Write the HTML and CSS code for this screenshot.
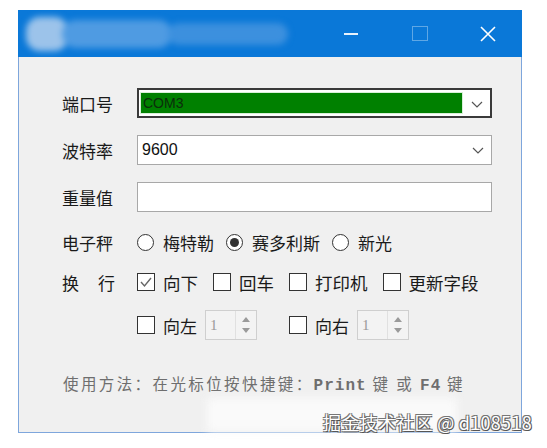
FILE: index.html
```html
<!DOCTYPE html>
<html lang="zh-CN">
<head>
    <meta charset="UTF-8">
    <meta name="viewport" content="width=device-width, initial-scale=1.0">
    <title>串口设置</title>
    <link rel="stylesheet" href="styles.css">
</head>
<body>
    <div class="window">
        <div class="titlebar">
            <div class="title-blur">
                <span class="blob blob-a"></span>
                <span class="blob blob-b"></span>
                <span class="blob blob-c"></span>
            </div>
            <div class="controls">
                <span class="ctl ctl-min"></span>
                <span class="ctl ctl-max"></span>
                <svg class="ctl-close" width="16" height="16" viewBox="0 0 16 16">
                    <path d="M1 1 L15 15 M15 1 L1 15" stroke="#fff" stroke-width="1.6" fill="none"/>
                </svg>
            </div>
        </div>

        <div class="content">
            <div class="row row-field">
                <label class="label">端口号</label>
                <div class="combo focused">
                    <span class="combo-sel">COM3</span>
                    <svg class="chevron" width="12" height="7" viewBox="0 0 12 7"><path d="M1 1 L6 6 L11 1" stroke="#555" stroke-width="1.2" fill="none"/></svg>
                </div>
            </div>
            <div class="row row-field">
                <label class="label">波特率</label>
                <div class="combo">
                    <span class="combo-text">9600</span>
                    <svg class="chevron" width="12" height="7" viewBox="0 0 12 7"><path d="M1 1 L6 6 L11 1" stroke="#555" stroke-width="1.2" fill="none"/></svg>
                </div>
            </div>
            <div class="row row-field">
                <label class="label">重量值</label>
                <div class="textbox"></div>
            </div>

            <div class="row row-radio">
                <label class="label">电子秤</label>
                <div class="options">
                    <span class="opt"><span class="radio"></span>梅特勒</span>
                    <span class="opt"><span class="radio on"></span>赛多利斯</span>
                    <span class="opt"><span class="radio"></span>新光</span>
                </div>
            </div>

            <div class="row row-check">
                <label class="label spaced"><span>换</span><span>行</span></label>
                <div class="options">
                    <span class="opt"><span class="check on">
                        <svg width="14" height="14" viewBox="0 0 14 14"><path d="M2 7 L5.5 11 L12 3" stroke="#666" stroke-width="1.4" fill="none"/></svg>
                    </span>向下</span>
                    <span class="opt"><span class="check"></span>回车</span>
                    <span class="opt"><span class="check"></span>打印机</span>
                    <span class="opt"><span class="check"></span>更新字段</span>
                </div>
            </div>

            <div class="row row-spin">
                <label class="label"></label>
                <div class="options">
                    <span class="opt"><span class="check"></span>向左</span>
                    <div class="spin">
                        <span class="spin-val">1</span>
                        <span class="spin-btns">
                            <svg width="8" height="5" viewBox="0 0 8 5"><path d="M0 5 L4 0 L8 5 Z" fill="#9a9a9a"/></svg>
                            <svg width="8" height="5" viewBox="0 0 8 5"><path d="M0 0 L4 5 L8 0 Z" fill="#9a9a9a"/></svg>
                        </span>
                    </div>
                    <span class="opt opt-right"><span class="check"></span>向右</span>
                    <div class="spin">
                        <span class="spin-val">1</span>
                        <span class="spin-btns">
                            <svg width="8" height="5" viewBox="0 0 8 5"><path d="M0 5 L4 0 L8 5 Z" fill="#9a9a9a"/></svg>
                            <svg width="8" height="5" viewBox="0 0 8 5"><path d="M0 0 L4 5 L8 0 Z" fill="#9a9a9a"/></svg>
                        </span>
                    </div>
                </div>
            </div>

            <p class="hint">使用方法：在光标位按快捷键：<span class="mono">Print</span> 键 或 <span class="mono">F4</span> 键</p>
            <div class="bottom-blur"></div>
        </div>
    </div>

    <div class="watermark">掘金技术社区 @ d108518</div>
</body>
</html>
```

FILE: styles.css
```css
body {
    margin: 0;
    padding: 10px 0 0 18px;
    background: #ffffff;
    font-family: "Noto Sans CJK SC", "Liberation Sans", sans-serif;
    position: relative;
    height: 448px;
    box-sizing: border-box;
    overflow: hidden;
}
.window {
    width: 504px;
    height: 423px;
    box-sizing: border-box;
    border: 1px solid #7ea6dc;
    border-top: none;
    background: #f0f0f0;
    display: flex;
    flex-direction: column;
}
.titlebar {
    height: 47px;
    margin: 0 -1px;
    background: #0a78d8;
    display: flex;
    align-items: center;
    justify-content: space-between;
    overflow: hidden;
}
.title-blur {
    display: flex;
    align-items: center;
    padding-left: 8px;
    filter: blur(3px);
}
.blob {
    display: block;
    height: 28px;
    border-radius: 14px;
}
.blob-a {
    width: 42px;
    height: 34px;
    background: #9cc3ea;
}
.blob-b {
    width: 110px;
    background: #4f9be2;
    margin-left: -6px;
}
.blob-c {
    width: 120px;
    height: 22px;
    background: #3c90de;
    margin-left: -4px;
}
.controls {
    display: flex;
    align-items: center;
    padding-right: 26px;
}
.ctl-min {
    display: block;
    width: 14px;
    height: 2px;
    background: #e8f2fc;
    margin-right: 54px;
}
.ctl-max {
    display: block;
    width: 14px;
    height: 13px;
    border: 1px solid rgba(255, 255, 255, 0.35);
    margin-right: 52px;
}
.ctl-close {
    display: block;
}
.content {
    flex: 1;
    padding: 31px 0 0 43px;
    position: relative;
}
.row {
    display: flex;
    align-items: center;
    height: 30px;
}
.row-field + .row-field {
    margin-top: 17px;
}
.row-radio {
    margin-top: 15px;
}
.row-check {
    margin-top: 10px;
}
.row-spin {
    margin-top: 13px;
}
.label {
    width: 75px;
    flex-shrink: 0;
    font-size: 17px;
    color: #1a1a1a;
}
.label.spaced {
    display: flex;
    justify-content: space-between;
    width: 53px;
    margin-right: 22px;
}
.combo, .textbox {
    width: 355px;
    height: 30px;
    box-sizing: border-box;
    border: 1px solid #a8a8a8;
    background: #ffffff;
    display: flex;
    align-items: center;
    position: relative;
}
.combo.focused {
    border: 2px solid #3a3a3a;
    padding: 1px;
}
.combo-sel {
    width: 323px;
    height: 22px;
    background: #008000;
    border: 1px solid #d8f0d8;
    box-sizing: border-box;
    font-family: "Liberation Sans Narrow", "Liberation Sans", sans-serif;
    font-size: 14px;
    line-height: 20px;
    color: #0b2e0b;
    padding-left: 2px;
}
.combo-text {
    font-family: "Liberation Sans", sans-serif;
    font-size: 16px;
    padding-left: 4px;
    color: #111;
}
.chevron {
    position: absolute;
    right: 7px;
    top: 11px;
}
.options {
    display: flex;
    align-items: center;
    font-size: 17px;
    color: #1a1a1a;
}
.opt {
    display: flex;
    align-items: center;
    margin-right: 12px;
}
.radio {
    width: 17px;
    height: 17px;
    box-sizing: border-box;
    border: 1px solid #333;
    border-radius: 50%;
    background: #fff;
    margin-right: 9px;
    display: flex;
    align-items: center;
    justify-content: center;
}
.radio.on::after {
    content: "";
    width: 9px;
    height: 9px;
    border-radius: 50%;
    background: #333;
}
.check {
    width: 18px;
    height: 18px;
    box-sizing: border-box;
    border: 1px solid #333;
    background: #fff;
    margin-right: 8px;
    display: flex;
    align-items: center;
    justify-content: center;
}
.row-check .options {
    font-size: 17.5px;
}
.row-check .opt {
    margin-right: 15px;
}
.spin {
    width: 52px;
    height: 30px;
    box-sizing: border-box;
    border: 1px solid #cfcfcf;
    background: #f3f3f3;
    display: flex;
    margin-right: 32px;
}
.opt + .spin {
    margin-left: -4px;
}
.spin-val {
    flex: 1;
    font-family: "Liberation Serif", serif;
    font-size: 15px;
    color: #9a9a9a;
    padding-left: 4px;
    line-height: 28px;
}
.spin-btns {
    width: 20px;
    border-left: 1px solid #e0e0e0;
    display: flex;
    flex-direction: column;
    align-items: center;
    justify-content: center;
    gap: 6px;
}
.hint {
    margin: 32px 0 0 1px;
    font-size: 15.5px;
    letter-spacing: 2.4px;
    color: #6e6e6e;
}
.mono {
    font-family: "Liberation Mono", monospace;
    font-size: 16px;
    font-weight: bold;
    letter-spacing: 1px;
}
.bottom-blur {
    position: absolute;
    left: 188px;
    bottom: 0;
    width: 250px;
    height: 34px;
    background: #fafafa;
    filter: blur(5px);
}
.watermark {
    position: absolute;
    left: 323px;
    top: 409px;
    font-size: 18px;
    color: #ffffff;
    letter-spacing: 0.3px;
    text-shadow: 1px 1px 0 #555, -1px -1px 0 #777, 1px -1px 0 #777, -1px 1px 0 #777;
}
```
